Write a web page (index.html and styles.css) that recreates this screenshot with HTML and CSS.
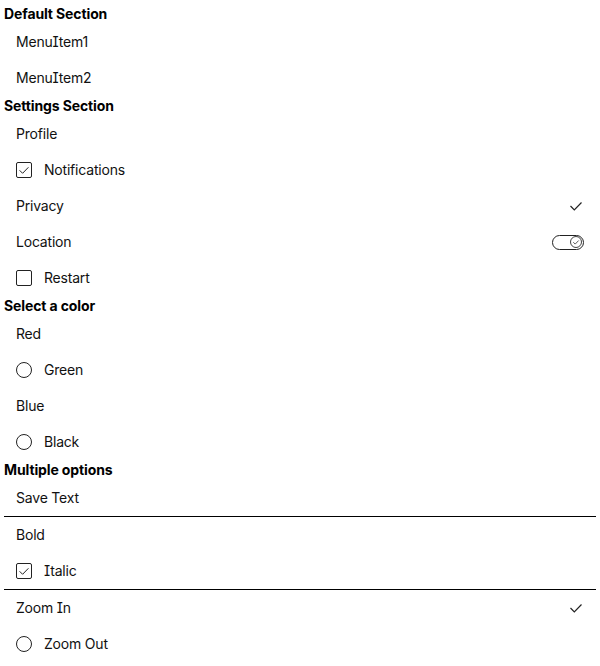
FILE: index.html
```html
<!DOCTYPE html>
<html>
<head>
<meta charset="utf-8">
<link rel="stylesheet" href="styles.css">
</head>
<body>
<div class="menu">
  <div class="header">Default Section</div>
  <div class="item"><span class="label">MenuItem1</span></div>
  <div class="item"><span class="label">MenuItem2</span></div>

  <div class="header">Settings Section</div>
  <div class="item"><span class="label">Profile</span></div>
  <div class="item">
    <span class="box checked"><svg viewBox="0 0 16 16" width="16" height="16"><path d="M3.6 8.3l3 3 5.8-6" fill="none" stroke="#222" stroke-width="1"/></svg></span>
    <span class="label">Notifications</span>
  </div>
  <div class="item">
    <span class="label grow">Privacy</span>
    <svg class="check" viewBox="0 0 16 16" width="16" height="16"><path d="M2.5 8l3.8 3.8 7.2-7.3" fill="none" stroke="#222" stroke-width="1.2"/></svg>
  </div>
  <div class="item">
    <span class="label grow">Location</span>
    <span class="toggle"><span class="knob"><svg viewBox="0 0 12 12" width="12" height="12"><path d="M3.3 6.2l1.9 1.9 3.5-3.6" fill="none" stroke="#444" stroke-width="0.9"/></svg></span></span>
  </div>
  <div class="item">
    <span class="box"></span>
    <span class="label">Restart</span>
  </div>

  <div class="header">Select a color</div>
  <div class="item"><span class="label">Red</span></div>
  <div class="item"><span class="radio"></span><span class="label">Green</span></div>
  <div class="item"><span class="label">Blue</span></div>
  <div class="item"><span class="radio"></span><span class="label">Black</span></div>

  <div class="header">Multiple options</div>
  <div class="item"><span class="label">Save Text</span></div>
  <div class="sep"></div>
  <div class="item"><span class="label">Bold</span></div>
  <div class="item">
    <span class="box checked"><svg viewBox="0 0 16 16" width="16" height="16"><path d="M3.6 8.3l3 3 5.8-6" fill="none" stroke="#222" stroke-width="1"/></svg></span>
    <span class="label">Italic</span>
  </div>
  <div class="sep"></div>
  <div class="item">
    <span class="label grow">Zoom In</span>
    <svg class="check" viewBox="0 0 16 16" width="16" height="16"><path d="M2.5 8l3.8 3.8 7.2-7.3" fill="none" stroke="#222" stroke-width="1.2"/></svg>
  </div>
  <div class="item"><span class="radio"></span><span class="label">Zoom Out</span></div>
</div>
</body>
</html>
```
FILE: styles.css
```css
html, body {
  margin: 0;
  padding: 0;
  background: #fff;
}
body {
  font-family: Inter, "Noto Sans", sans-serif;
  font-feature-settings: "cv08";
  font-size: 14px;
  color: #111;
}
.menu {
  display: flex;
  flex-direction: column;
  padding: 4px 4px 0 4px;
}
.header {
  font-weight: 700;
  height: 20px;
  line-height: 20px;
  color: #000;
  letter-spacing: -0.12px;
}
.item {
  display: flex;
  align-items: center;
  height: 36px;
  padding: 0 12px;
  gap: 12px;
}
.label {
  line-height: 20px;
  letter-spacing: -0.2px;
}
.grow {
  flex: 1;
}
.box {
  width: 16px;
  height: 16px;
  box-sizing: border-box;
  border: 1px solid #222;
  border-radius: 2px;
  display: flex;
  align-items: center;
  justify-content: center;
}
.box svg {
  display: block;
  margin: -1px;
}
.radio {
  width: 16px;
  height: 16px;
  box-sizing: border-box;
  border: 1px solid #222;
  border-radius: 50%;
}
.check {
  display: block;
}
.toggle {
  width: 32px;
  height: 15px;
  box-sizing: border-box;
  border: 1px solid #222;
  border-radius: 8px;
  display: flex;
  align-items: center;
  justify-content: flex-end;
  padding-right: 1px;
}
.knob {
  width: 12px;
  height: 12px;
  box-sizing: border-box;
  border: 1px solid #444;
  border-radius: 50%;
  display: flex;
  align-items: center;
  justify-content: center;
}
.knob svg {
  display: block;
  margin: -1px;
}
.sep {
  height: 1px;
  background: #000;
}
```
